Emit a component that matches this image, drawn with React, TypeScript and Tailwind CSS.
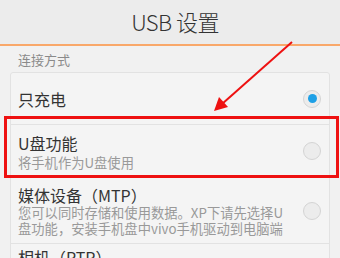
import React from 'react'

function Radio({ checked }: { checked?: boolean }) {
  return (
    <span className="flex h-[18px] w-[18px] shrink-0 items-center justify-center rounded-full border border-[#d4d4d4] bg-[#ececec]">
      {checked && <span className="h-[9px] w-[9px] rounded-full bg-[#1ea0e6]" />}
    </span>
  )
}

export default function App() {
  return (
    <div
      className="relative h-[258px] w-[340px] overflow-hidden bg-[#f1f1f1] text-[#333]"
      style={{ fontFamily: '"Noto Sans CJK SC", "Noto Sans", sans-serif' }}
    >
      {/* Header */}
      <div className="flex h-[46px] items-center justify-center border-b-2 border-[#f9a86a] bg-[#ececec] pb-[2px] pl-[10px]">
        <span className="text-[22px] font-light tracking-tight text-[#333]">USB 设置</span>
      </div>

      {/* Section */}
      <div className="px-[10px]">
        <p className="h-[26px] pl-[8px] pt-[6px] text-[13px] leading-[16px] text-[#8a8a8a]">连接方式</p>
        <div className="rounded-t-[3px] border border-[#e2e2e2] bg-[#f4f4f4]">
          <div className="flex h-[52px] items-center justify-between border-b border-[#e2e2e2] pl-[7px] pr-[8px]">
            <span className="text-[16px] leading-none">只充电</span>
            <Radio checked />
          </div>
          <div className="flex h-[53px] items-center justify-between border-b border-[#e2e2e2] pl-[7px] pr-[8px]">
            <div className="flex flex-col pt-[4px]">
              <span className="text-[16px] leading-[20px]">U盘功能</span>
              <span className="text-[13.3px] leading-[20px] text-[#999]">将手机作为U盘使用</span>
            </div>
            <Radio />
          </div>
          <div className="flex h-[66px] items-center justify-between border-b border-[#e2e2e2] pl-[7px] pr-[8px]">
            <div className="flex flex-col pt-[1px]">
              <span className="text-[16px] leading-[20px]">媒体设备（MTP）</span>
              <span className="text-[13.3px] leading-[16px] text-[#999]">
                您可以同时存储和使用数据。XP下请先选择U
                <br />
                盘功能，安装手机盘中vivo手机驱动到电脑端
              </span>
            </div>
            <Radio />
          </div>
          <div className="flex h-[40px] items-start pl-[7px] pr-[8px] pt-[3px]">
            <span className="text-[16px] leading-[20px]">相机（PTP）</span>
          </div>
        </div>
      </div>

      {/* Annotation: red box */}
      <div className="absolute left-[4px] top-[116px] h-[62px] w-[335px] border-[3px] border-[#ee1111]" />

      {/* Annotation: red arrow */}
      <svg className="absolute left-0 top-0" width="340" height="258" viewBox="0 0 340 258">
        <line x1="292" y1="42" x2="222" y2="104" stroke="#ee1111" strokeWidth="2" />
        <polygon points="214,111 219,97 228,107" fill="#ee1111" />
      </svg>
    </div>
  )
}
